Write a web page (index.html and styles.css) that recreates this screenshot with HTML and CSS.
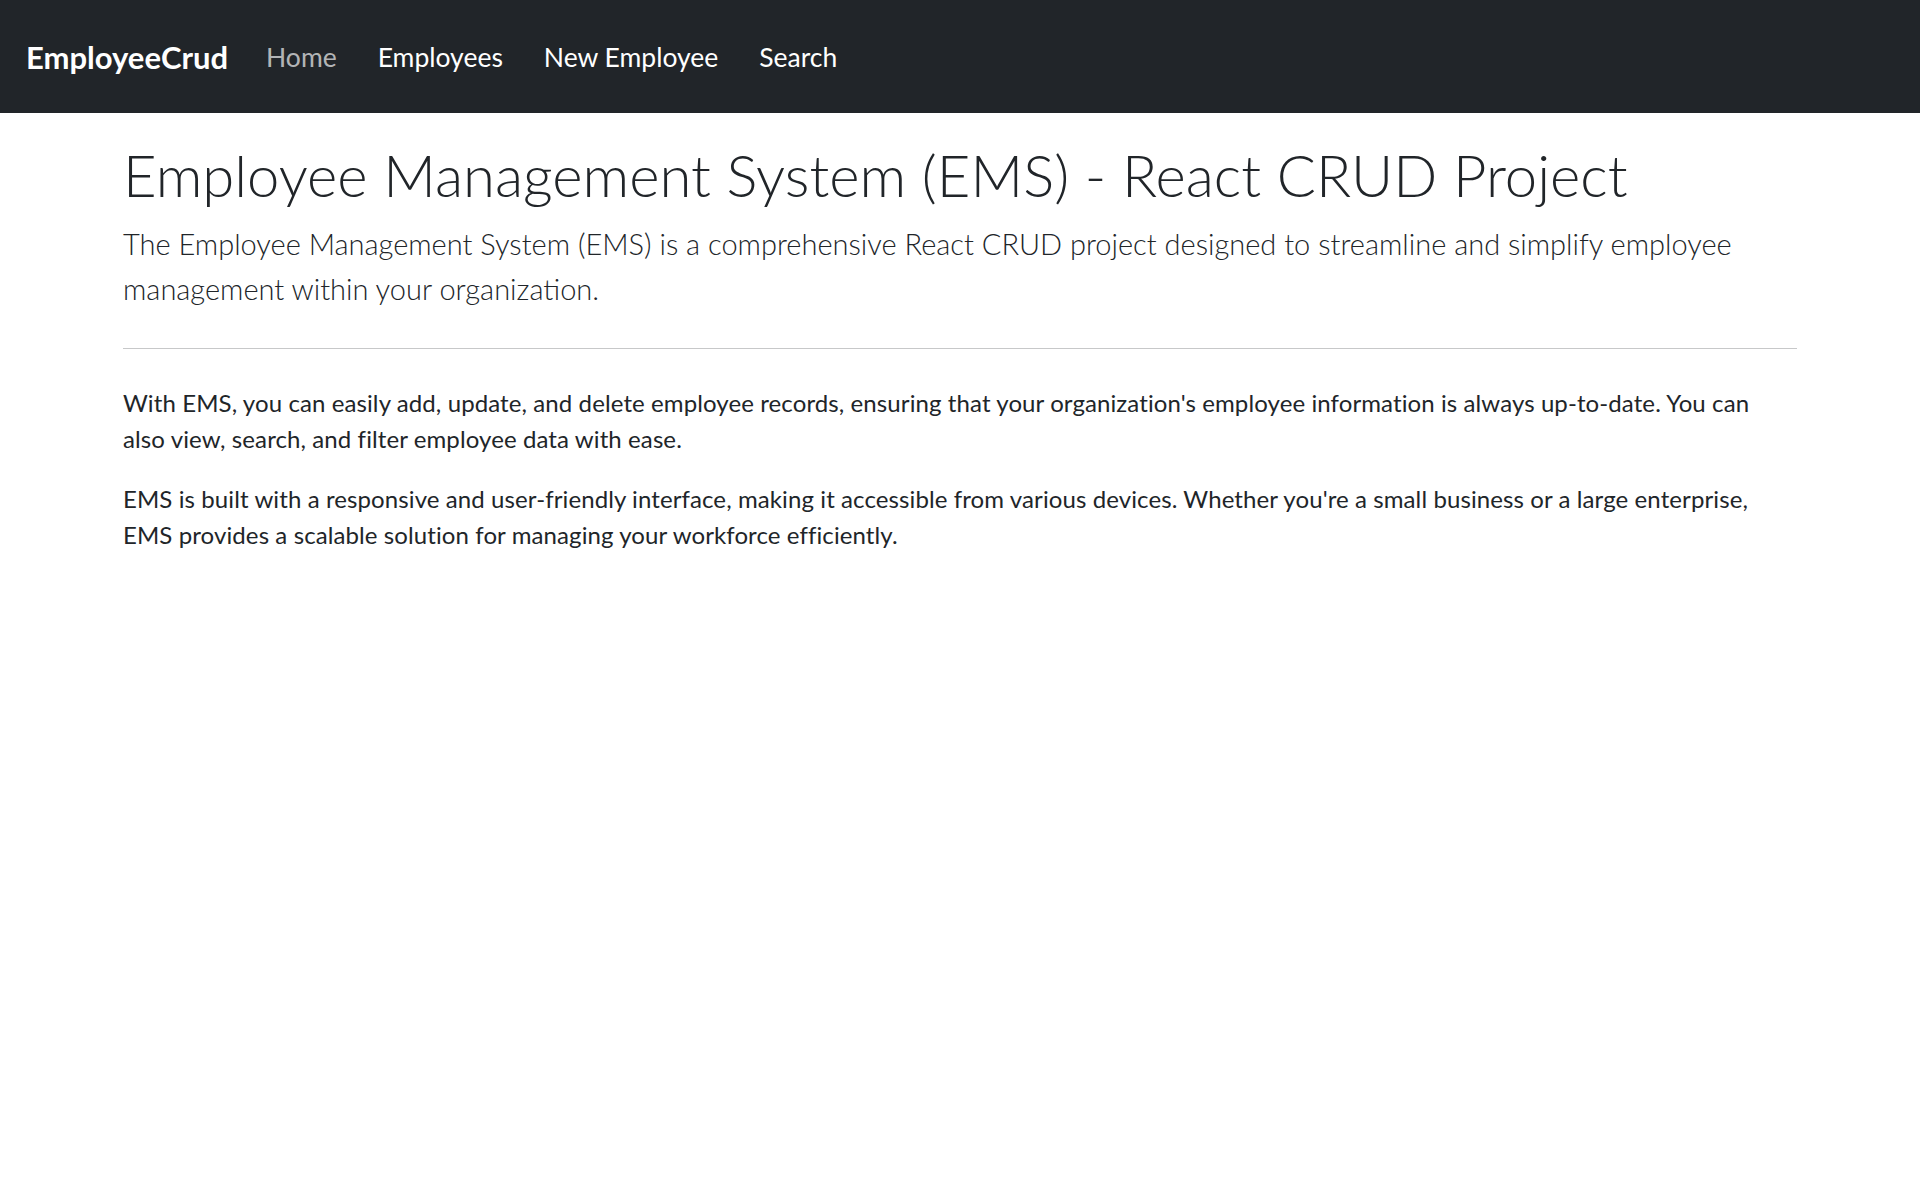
FILE: index.html
```html
<!DOCTYPE html>
<html lang="en">
<head>
<meta charset="utf-8">
<title>EmployeeCrud</title>
<link rel="stylesheet" href="styles.css">
</head>
<body>
<nav class="navbar">
  <a class="brand" href="#">EmployeeCrud</a>
  <ul class="nav-links">
    <li><a class="nav-link muted" href="#">Home</a></li>
    <li><a class="nav-link" href="#">Employees</a></li>
    <li><a class="nav-link" href="#">New Employee</a></li>
    <li><a class="nav-link" href="#">Search</a></li>
  </ul>
</nav>
<main class="container">
  <h1 class="title">Employee Management System (EMS) - React CRUD Project</h1>
  <p class="lead">The Employee Management System (EMS) is a comprehensive React CRUD project designed to streamline and simplify employee management within your organization.</p>
  <hr class="divider">
  <p class="body-text">With EMS, you can easily add, update, and delete employee records, ensuring that your organization's employee information is always up-to-date. You can also view, search, and filter employee data with ease.</p>
  <p class="body-text">EMS is built with a responsive and user-friendly interface, making it accessible from various devices. Whether you're a small business or a large enterprise, EMS provides a scalable solution for managing your workforce efficiently.</p>
</main>
</body>
</html>
```
FILE: styles.css
```css
html, body {
  margin: 0;
  padding: 0;
  background: #ffffff;
}
body {
  font-family: "Lato", "Open Sans", sans-serif;
  color: #212529;
  font-size: 24px;
  line-height: 36px;
}
.navbar {
  height: 113px;
  background: #212529;
  display: flex;
  align-items: center;
  padding: 2px 0 0 26px;
  box-sizing: border-box;
}
.brand {
  font-size: 31px;
  font-weight: 700;
  line-height: 1.2;
  color: #ffffff;
  text-decoration: none;
  margin-right: 38px;
}
.nav-links {
  list-style: none;
  margin: 0;
  padding: 0;
  display: flex;
  gap: 41px;
}
.nav-link {
  font-size: 26.5px;
  line-height: 1.2;
  color: #ffffff;
  text-decoration: none;
  display: block;
}
.nav-link.muted {
  color: rgba(255, 255, 255, 0.68);
}
.container {
  max-width: 1710px;
  margin: 0 auto;
  padding: 0 18px;
  box-sizing: border-box;
}
.title {
  font-size: 58px;
  font-weight: 300;
  line-height: 1.2;
  margin: 27px 0 11px;
  color: #212529;
}
.lead {
  font-size: 29px;
  font-weight: 300;
  line-height: 45px;
  margin: 0;
}
.divider {
  margin: 37px 0 36px;
  border: 0;
  border-top: 1px solid #212529;
  opacity: 0.25;
}
.body-text {
  margin: 0 0 24px;
  letter-spacing: 0.1px;
}
```
